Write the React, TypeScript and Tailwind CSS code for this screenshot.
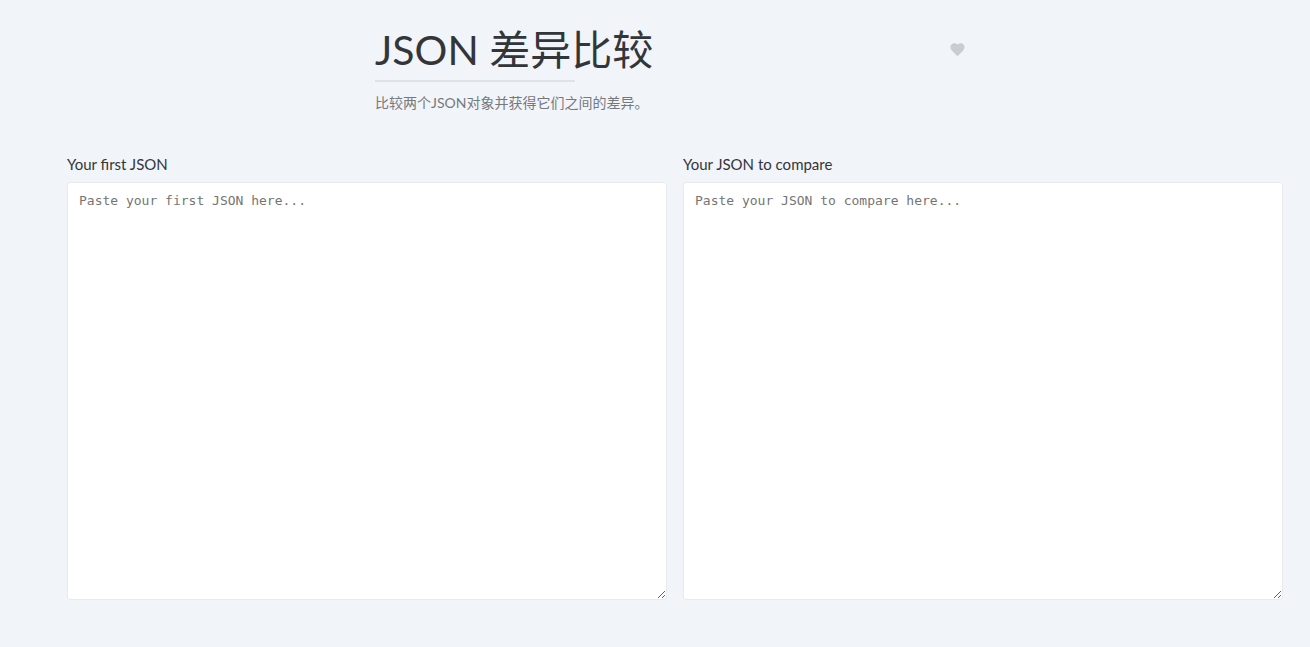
import { useId } from "react";

type JsonInputProps = { label: string; placeholder: string };

function JsonInput({ label, placeholder }: JsonInputProps) {
  const id = useId();
  return (
    <div className="min-w-0 flex-1">
      <label htmlFor={id} className="block text-[15px] leading-6 text-[#333639]">
        {label}
      </label>
      <textarea
        id={id}
        placeholder={placeholder}
        rows={20}
        spellCheck={false}
        className="mt-1.5 block w-full resize rounded-[3px] border border-[#e8eaee] bg-white px-[11px] py-2 font-['DejaVu_Sans_Mono',monospace] text-[13px] leading-5 text-[#333639] outline-none placeholder:text-[#757575]"
      />
    </div>
  );
}

export default function App() {
  return (
    <main className="min-h-screen bg-[#f1f4f9] pt-[22px] pr-[27px] pb-12 pl-[67px] font-['Lato','Noto_Sans_CJK_SC',sans-serif]">
      <header className="mx-auto w-[600px]">
        <div className="flex items-start justify-between pb-0.5">
          <h1 className="text-[41px] leading-[56px] text-[#333639]">JSON 差异比较</h1>
          <button type="button" aria-label="Favorite" className="px-[9px] pt-[19px] pb-2 text-[#cacdd0]">
            <svg viewBox="0 0 24 24" className="size-[17px]" fill="currentColor" aria-hidden="true">
              <path d="M12 21.35l-1.45-1.32C5.4 15.36 2 12.28 2 8.5 2 5.42 4.42 3 7.5 3c1.74 0 3.41.81 4.5 2.09C13.09 3.81 14.76 3 16.5 3 19.58 3 22 5.42 22 8.5c0 3.78-3.4 6.86-8.55 11.54L12 21.35z" />
            </svg>
          </button>
        </div>
        <div className="h-0.5 w-[200px] bg-[#dfe3e6]" />
        <p className="pt-[11px] text-sm leading-5 text-[#76797c]">比较两个JSON对象并获得它们之间的差异。</p>
      </header>
      <section className="flex gap-4 pt-[39px]">
        <JsonInput label="Your first JSON" placeholder="Paste your first JSON here..." />
        <JsonInput label="Your JSON to compare" placeholder="Paste your JSON to compare here..." />
      </section>
    </main>
  );
}
